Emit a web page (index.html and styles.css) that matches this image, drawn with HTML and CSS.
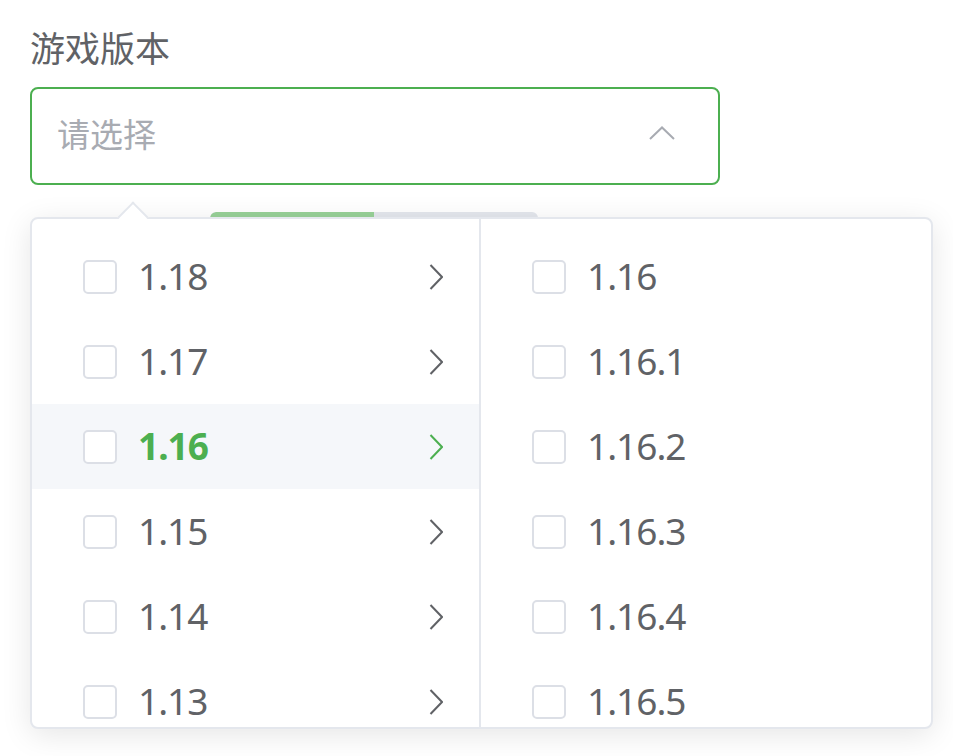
FILE: index.html
```html
<!DOCTYPE html>
<html lang="zh-CN">
<head>
<meta charset="utf-8">
<title>游戏版本</title>
<link rel="stylesheet" href="styles.css">
</head>
<body>
<div class="page">
  <div class="label">游戏版本</div>
  <div class="select">
    <span class="placeholder">请选择</span>
    <svg class="caret" width="26" height="14" viewBox="0 0 26 14"><polyline points="1,13 13,1.5 25,13" fill="none" stroke="currentColor" stroke-width="2"/></svg>
  </div>
  <div class="progress"><div class="progress-fill" style="width:50%"></div></div>

  <div class="dropdown">
    <div class="panel panel-left">
      <div class="row"><span class="check"></span><span class="text">1.18</span><svg class="arrow" width="14" height="26" viewBox="0 0 14 26"><polyline points="1.5,1 13,13 1.5,25" fill="none" stroke="currentColor" stroke-width="2"/></svg></div>
      <div class="row"><span class="check"></span><span class="text">1.17</span><svg class="arrow" width="14" height="26" viewBox="0 0 14 26"><polyline points="1.5,1 13,13 1.5,25" fill="none" stroke="currentColor" stroke-width="2"/></svg></div>
      <div class="row active"><span class="check"></span><span class="text">1.16</span><svg class="arrow" width="14" height="26" viewBox="0 0 14 26"><polyline points="1.5,1 13,13 1.5,25" fill="none" stroke="currentColor" stroke-width="2"/></svg></div>
      <div class="row"><span class="check"></span><span class="text">1.15</span><svg class="arrow" width="14" height="26" viewBox="0 0 14 26"><polyline points="1.5,1 13,13 1.5,25" fill="none" stroke="currentColor" stroke-width="2"/></svg></div>
      <div class="row"><span class="check"></span><span class="text">1.14</span><svg class="arrow" width="14" height="26" viewBox="0 0 14 26"><polyline points="1.5,1 13,13 1.5,25" fill="none" stroke="currentColor" stroke-width="2"/></svg></div>
      <div class="row"><span class="check"></span><span class="text">1.13</span><svg class="arrow" width="14" height="26" viewBox="0 0 14 26"><polyline points="1.5,1 13,13 1.5,25" fill="none" stroke="currentColor" stroke-width="2"/></svg></div>
    </div>
    <div class="panel panel-right">
      <div class="row"><span class="check"></span><span class="text">1.16</span></div>
      <div class="row"><span class="check"></span><span class="text">1.16.1</span></div>
      <div class="row"><span class="check"></span><span class="text">1.16.2</span></div>
      <div class="row"><span class="check"></span><span class="text">1.16.3</span></div>
      <div class="row"><span class="check"></span><span class="text">1.16.4</span></div>
      <div class="row"><span class="check"></span><span class="text">1.16.5</span></div>
    </div>
  </div>
</div>
</body>
</html>
```

FILE: styles.css
```css
html, body {
  margin: 0;
  padding: 0;
  background: #ffffff;
}

body {
  font-family: "Noto Sans", "Noto Sans CJK SC", sans-serif;
  color: #606266;
}

.page {
  position: relative;
  padding: 27px 0 0 30px;
  height: 729px;
}

.label {
  font-family: "Noto Sans CJK SC", sans-serif;
  font-size: 35px;
  line-height: 40px;
  color: #606266;
  margin-bottom: 20px;
}

.select {
  box-sizing: border-box;
  width: 690px;
  height: 98px;
  border: 2px solid #4caf50;
  border-radius: 8px;
  display: flex;
  align-items: center;
  justify-content: space-between;
  padding: 0 43px 0 25px;
}

.placeholder {
  font-family: "Noto Sans CJK SC", sans-serif;
  font-size: 33px;
  color: #a8abb2;
  margin-bottom: 7px;
}

.caret {
  color: #a8abb2;
  display: block;
  margin-bottom: 7px;
}

.progress {
  margin: 27px 0 0 180px;
  width: 328px;
  height: 12px;
  border-radius: 6px;
  background: #e4e7ed;
  overflow: hidden;
}

.progress-fill {
  height: 100%;
  background: #98d198;
  border-radius: 6px 0 0 6px;
}

.dropdown {
  position: absolute;
  left: 30px;
  top: 217px;
  box-sizing: border-box;
  width: 903px;
  height: 512px;
  border: 2px solid #e4e7ed;
  border-radius: 8px;
  background: #ffffff;
  box-shadow: 0 6px 30px rgba(0, 0, 0, 0.1);
  display: flex;
}

.dropdown::before {
  content: "";
  position: absolute;
  left: 90px;
  top: -13px;
  width: 22px;
  height: 22px;
  background: #ffffff;
  border-top: 2px solid #e4e7ed;
  border-left: 2px solid #e4e7ed;
  box-sizing: border-box;
  transform: rotate(45deg);
}

.panel {
  box-sizing: border-box;
  padding-top: 15px;
  overflow: hidden;
}

.panel-left {
  width: 449px;
  border-right: 2px solid #e4e7ed;
  border-radius: 6px 0 0 6px;
  flex: none;
}

.panel-right {
  flex: 1;
  border-radius: 0 6px 6px 0;
}

.row {
  height: 85px;
  display: flex;
  align-items: center;
  padding: 0 36px 0 51px;
  color: #606266;
}

.row.active {
  background: #f5f7fa;
  color: #4caf50;
}

.row.active .text {
  font-weight: 700;
}

.check {
  box-sizing: border-box;
  width: 34px;
  height: 34px;
  border: 2px solid #dcdfe6;
  border-radius: 5px;
  background: #ffffff;
  margin-right: 21px;
  flex: none;
}

.text {
  flex: 1;
  font-size: 37px;
  letter-spacing: -1px;
  margin-bottom: 2px;
}

.arrow {
  display: block;
  flex: none;
}
```
